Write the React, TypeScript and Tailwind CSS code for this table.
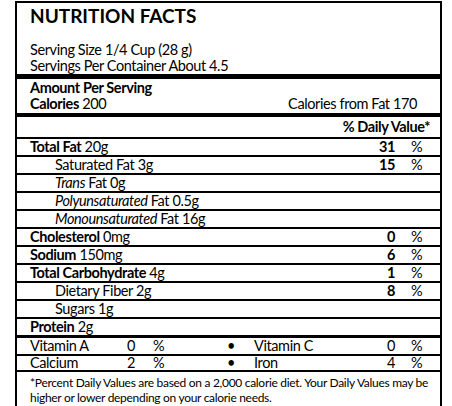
import React from 'react';

type Row = {
  label: React.ReactNode;
  value?: number;
  indent?: boolean;
};

const rows: Row[] = [
  { label: <><b>Total Fat</b> 20g</>, value: 31 },
  { label: <>Saturated Fat 3g</>, value: 15, indent: true },
  { label: <><i>Trans</i> Fat 0g</>, indent: true },
  { label: <><i>Polyunsaturated</i> Fat 0.5g</>, indent: true },
  { label: <><i>Monounsaturated</i> Fat 16g</>, indent: true },
  { label: <><b>Cholesterol</b> 0mg</>, value: 0 },
  { label: <><b>Sodium</b> 150mg</>, value: 6 },
  { label: <><b>Total Carbohydrate</b> 4g</>, value: 1 },
  { label: <>Dietary Fiber 2g</>, value: 8, indent: true },
  { label: <>Sugars 1g</>, indent: true },
  { label: <><b>Protein</b> 2g</> },
];

function VitaminRow({ a, av, b, bv, h }: { a: string; av: number; b: string; bv: number; h: string }) {
  return (
    <div className={`flex items-center px-[13px] ${h} leading-[16px]`}>
      <span className="w-[96px]">{a}</span>
      <span className="w-[9px] text-right">{av}</span>
      <span className="ml-[18px] w-[20px]">%</span>
      <span className="w-[81px] pl-[54px]">•</span>
      <span className="w-[132px]">{b}</span>
      <span className="w-[9px] text-right">{bv}</span>
      <span className="ml-[16px]">%</span>
    </div>
  );
}

export default function App() {
  return (
    <div className="w-[452px] h-[406px] bg-white pt-[1px] pl-[15px] text-black font-['Lato',sans-serif] text-[14.5px] tracking-[-0.4px]">
      <div className="w-[427px] border-2 border-black">
        {/* Header */}
        <div className="px-[13px] h-[71px]">
          <h1 className="text-[19px] font-bold leading-[24px] pt-[1px] tracking-normal">NUTRITION FACTS</h1>
          <div className="mt-[14px] leading-[16px]">
            <div>Serving Size 1/4 Cup (28 g)</div>
            <div>Servings Per Container About 4.5</div>
          </div>
        </div>
        <div className="h-[5px] bg-black" />

        <div className="px-[13px] pt-[1px] h-[34px] leading-[16px]">
          <div className="font-bold">Amount Per Serving</div>
          <div className="flex justify-between">
            <span><b>Calories</b> 200</span>
            <span className="pr-[10px]">Calories from Fat 170</span>
          </div>
        </div>
        <div className="h-[4px] bg-black" />

        <div className="h-[20px] leading-[20px] px-[10px] text-right font-bold">% Daily Value*</div>

        {rows.map((r, i) => (
          <div key={i} className="flex items-center h-[18px] border-t-2 border-black pl-[13px] leading-[16px]">
            <span className={`flex-1 ${r.indent ? 'pl-[25px]' : ''}`}>{r.label}</span>
            {r.value !== undefined && (
              <>
                <span className="w-[40px] text-right font-bold">{r.value}</span>
                <span className="w-[29px] ml-[16px]">%</span>
              </>
            )}
          </div>
        ))}

        <div className="h-[3px] bg-black" />
        <VitaminRow a="Vitamin A" av={0} b="Vitamin C" bv={0} h="h-[16px]" />
        <div className="border-t-2 border-black">
          <VitaminRow a="Calcium" av={2} b="Iron" bv={4} h="h-[14px]" />
        </div>
        <div className="border-t-2 border-black pl-[13px] pr-[8px] pt-[3px] pb-[2px] text-[12px] leading-[15px] tracking-[-0.3px]">
          *Percent Daily Values are based on a 2,000 calorie diet. Your Daily Values may be higher or lower depending on your calorie needs.
        </div>
      </div>
    </div>
  );
}
